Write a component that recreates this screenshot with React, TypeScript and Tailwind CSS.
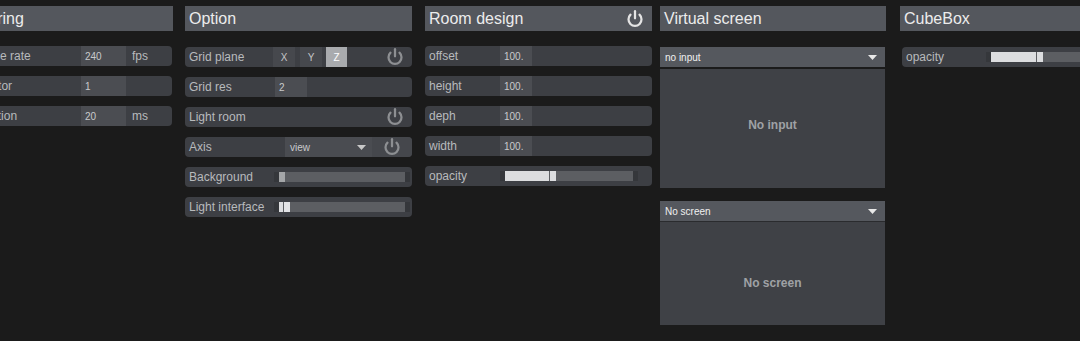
import React from "react";

const font = { fontFamily: '"Liberation Sans", Arial, sans-serif' };

function Power({ color, size }: { color: string; size: number }) {
  return (
    <svg width={size} height={size} viewBox="0 0 24 24" fill="none" stroke={color} strokeWidth="2.7" strokeLinecap="round">
      <path d="M6.6 6.8A7.8 7.8 0 1 0 17.4 6.8" />
      <path d="M12 2.6v8.6" />
    </svg>
  );
}

function Header({ title, power }: { title: string; power?: boolean }) {
  return (
    <div className="h-[25px] bg-[#54575d] flex items-center justify-between pl-[4px] pr-[7px]">
      <span className="text-[16px] text-[#ececec] whitespace-nowrap">{title}</span>
      {power && <Power color="#e4e4e4" size={20} />}
    </div>
  );
}

function Row({ children, className = "" }: { children: React.ReactNode; className?: string }) {
  return <div className={"h-[20px] rounded-[4px] bg-[#3d3f44] flex items-center overflow-hidden " + className}>{children}</div>;
}

function Label({ text, w, extra = "" }: { text: string; w: string; extra?: string }) {
  return <span className={"pl-[4px] text-[12px] text-[#b8babd] whitespace-nowrap shrink-0 " + w + " " + extra}>{text}</span>;
}

function Value({ v, w }: { v: string; w: string }) {
  return <div className={"h-full bg-[#4b4d52] flex items-center pl-[4px] text-[10px] text-[#c9cacc] shrink-0 " + w}>{v}</div>;
}

function Slider({ fill, handle, w }: { fill: number; handle: string; w: string }) {
  return (
    <div className={"h-[10px] bg-[#35373b] px-[5px] flex shrink-0 overflow-hidden " + w}>
      <div className="flex-1 h-full bg-[#5c5e62] flex">
        {fill > 0 && <div className="h-full bg-[#dcdddf]" style={{ width: fill }} />}
        {fill > 0 && <div className="h-full w-[1px] bg-[#5c5e62]" />}
        <div className={"h-full w-[6px] " + handle} />
      </div>
    </div>
  );
}

function Dropdown({ text }: { text: string }) {
  return (
    <div className="h-[20px] bg-[#55585e] flex items-center justify-between pl-[5px] pr-[8px]">
      <span className="text-[10px] text-[#f0f0f0]">{text}</span>
      <svg width="9" height="5" viewBox="0 0 9 5"><path d="M0 0h9L4.5 5z" fill="#e8e8e8" /></svg>
    </div>
  );
}

export default function App() {
  return (
    <div className="w-[1080px] h-[341px] bg-[#1b1b1b] overflow-hidden flex pt-[6px]" style={font}>
      {/* Column 1 */}
      <div className="w-[227px] ml-[-54px] shrink-0">
        <Header title="Rendering" />
        <div className="mt-[15px] flex flex-col gap-[10px] pr-[1px]">
          <Row>
            <Label text="Max frame rate" w="w-[135px]" />
            <Value v="240" w="w-[45px]" />
            <span className="pl-[6px] text-[12px] text-[#b8babd]">fps</span>
          </Row>
          <Row>
            <Label text="Speed factor" w="w-[135px]" extra="indent-[-6px]" />
            <Value v="1" w="w-[45px]" />
          </Row>
          <Row>
            <Label text="Fade duration" w="w-[135px]" extra="indent-[-7px]" />
            <Value v="20" w="w-[45px]" />
            <span className="pl-[6px] text-[12px] text-[#b8babd]">ms</span>
          </Row>
        </div>
      </div>

      {/* Option */}
      <div className="w-[227px] ml-[12px] shrink-0">
        <Header title="Option" />
        <div className="mt-[16px] flex flex-col gap-[10px]">
          <Row>
            <Label text="Grid plane" w="w-[88px]" />
            <div className="h-full w-[22px] bg-[#46484d] flex items-center justify-center text-[10px] text-[#c4c5c7]">X</div>
            <div className="h-full w-[22px] ml-[5px] bg-[#46484d] flex items-center justify-center text-[10px] text-[#c4c5c7]">Y</div>
            <div className="h-full w-[21px] ml-[4px] bg-[#a9abae] flex items-center justify-center text-[10px] text-white">Z</div>
            <div className="flex-1 flex justify-end pr-[7px]"><Power color="#8d8f92" size={20} /></div>
          </Row>
          <Row>
            <Label text="Grid res" w="w-[90px]" />
            <Value v="2" w="w-[32px]" />
          </Row>
          <Row>
            <Label text="Light room" w="w-[90px]" />
            <div className="flex-1 flex justify-end pr-[7px]"><Power color="#8d8f92" size={20} /></div>
          </Row>
          <Row>
            <Label text="Axis" w="w-[100px]" />
            <div className="h-full w-[87px] bg-[#4a4c51] flex items-center justify-between pl-[5px] pr-[6px]">
              <span className="text-[10px] text-[#c9cacc]">view</span>
              <svg width="9" height="5" viewBox="0 0 9 5"><path d="M0 0h9L4.5 5z" fill="#c8c8c8" /></svg>
            </div>
            <div className="flex-1 h-full bg-[#45474c] flex items-center justify-center"><Power color="#8d8f92" size={20} /></div>
          </Row>
          <Row>
            <Label text="Background" w="w-[89px]" />
            <Slider fill={0} handle="bg-[#a4a6a8]" w="w-[136px]" />
          </Row>
          <Row>
            <Label text="Light interface" w="w-[89px]" />
            <Slider fill={4} handle="bg-[#e2e3e5]" w="w-[136px]" />
          </Row>
        </div>
      </div>

      {/* Room design */}
      <div className="w-[227px] ml-[13px] shrink-0">
        <Header title="Room design" power />
        <div className="mt-[15px] flex flex-col gap-[10px]">
          {["offset", "height", "deph", "width"].map((l) => (
            <Row key={l}>
              <Label text={l} w="w-[75px]" />
              <Value v="100." w="w-[32px]" />
            </Row>
          ))}
          <Row>
            <Label text="opacity" w="w-[75px]" />
            <Slider fill={44} handle="bg-[#dcdddf]" w="w-[138px]" />
          </Row>
        </div>
      </div>

      {/* Virtual screen */}
      <div className="w-[226px] ml-[8px] shrink-0">
        <Header title="Virtual screen" />
        <div className="mt-[16px] pr-[1px]">
          <Dropdown text="no input" />
          <div className="mt-[2px] h-[119px] bg-[#3f4146] flex justify-center pt-[47px]">
            <span className="text-[12px] font-bold text-[#9fa1a5]">No input</span>
          </div>
          <div className="mt-[13px]">
            <Dropdown text="No screen" />
          </div>
          <div className="h-[1px] bg-[#2a2b2e]" />
          <div className="h-[103px] bg-[#3f4146] flex justify-center pt-[52px]">
            <span className="text-[12px] font-bold text-[#9fa1a5]">No screen</span>
          </div>
        </div>
      </div>

      {/* CubeBox */}
      <div className="w-[227px] ml-[14px] shrink-0">
        <Header title="CubeBox" />
        <div className="mt-[16px] pl-[2px]">
          <Row>
            <Label text="opacity" w="w-[84px]" />
            <Slider fill={45} handle="bg-[#dcdddf]" w="w-[138px]" />
          </Row>
        </div>
      </div>
    </div>
  );
}
